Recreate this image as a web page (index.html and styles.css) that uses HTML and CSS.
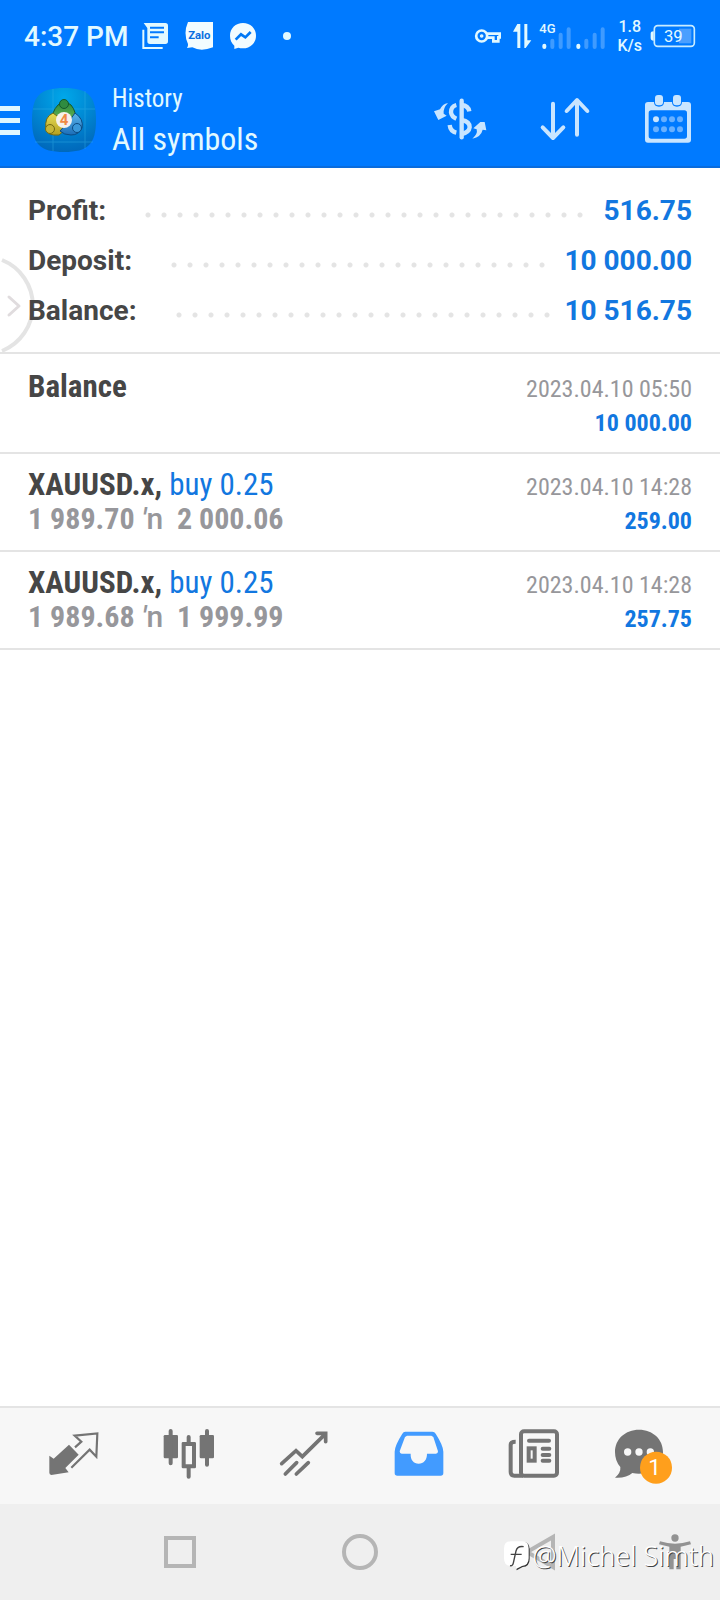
FILE: index.html
```html
<!DOCTYPE html>
<html lang="en">
<head>
<meta charset="utf-8">
<meta name="viewport" content="width=device-width, initial-scale=1">
<title>History</title>
<link rel="stylesheet" href="styles.css">
</head>
<body>
<div class="screen">
  <header class="top">
    <div class="status">
      <div class="status-left">
        <span class="clock">4:37 PM</span>
        <svg width="26" height="26" viewBox="426 69 78 78"><path fill="#e2f9ff" fill-rule="evenodd" d="M431 69H496q8 0 8 8V124q0 8-8 8H450q-8 0-8-8V84zM450 80h42v6h-42zM450 94h42v6h-42zM450 109h26v6h-26z"/><path d="M430 89V144H488" fill="none" stroke="#e2f9ff" stroke-width="6"/></svg>
        <svg width="28" height="28" viewBox="558 66 84 84"><path fill="#f2fcff" d="M567 66H642V142Q606 156 580 142L564 144Q568 139 567 132Q552 100 567 66z"/><text x="601" y="117" text-anchor="middle" font-size="34" font-weight="700" fill="#0b6fe0">Zalo</text></svg>
        <svg width="26" height="26" viewBox="690 69 78 78"><path fill="#f2fcff" d="M729 69C751 69 768 85 768 107S751 145 729 145q-8 0-14-2l-12 4v-10C695 130 690 119 690 107C690 85 707 69 729 69z"/><path d="M707 119L723 103L736 112L752 96" fill="none" stroke="#0078f5" stroke-width="8"/></svg>
        <span class="dot"></span>
      </div>
      <div class="status-right">
        <svg width="26" height="16" viewBox="345 85 78 48"><g fill="none" stroke="#e2f9ff"><circle cx="365" cy="109" r="16.5" stroke-width="8"/><circle cx="365" cy="109" r="3" stroke-width="5"/><path d="M381 102H419V113H415V125H400V114H381" stroke-width="8"/></g></svg>
        <svg width="18" height="24" viewBox="461 74 54 72"><path fill="#e2f9ff" d="M474 74h9v72h-9V97h-13zM495 74h9v49h12l-17 23h-4z"/></svg>
        <svg class="signal" width="66" height="30" viewBox="538 60 198 90"><text x="539" y="95" font-size="39" font-weight="500" fill="#e2f9ff">4G</text><g stroke-linecap="round" stroke-width="12"><path d="M554 134v4M656 134v4" stroke="#e2f9ff"/><path d="M578 119v19M603 101v37M627 85v53M680 119v19M705 101v37M729 85v53" stroke="#3f9bff"/></g></svg>
        <span class="speed">1.8<br>K/s</span>
        <svg class="battery" width="45" height="22" viewBox="870 75 135 66"><rect x="883" y="77" width="120" height="62" rx="10" fill="none" stroke="#c9ecff" stroke-width="5"/><path d="M881 94q-9 0-9 7v13q0 8 9 8z" fill="#e2f9ff"/><rect x="957" y="86" width="37" height="44" fill="#4a9fff"/><text x="940" y="126" text-anchor="middle" font-size="50" fill="#e2f9ff">39</text></svg>
      </div>
    </div>
    <div class="appbar">
      <button class="icon-btn burger" aria-label="Menu"><svg width="20" height="30" viewBox="0 0 20 30"><path d="M0 2.5H20M0 14.5H20M0 26.5H20" stroke="#dff6ff" stroke-width="5"/></svg></button>
      <svg class="logo" width="64" height="64" viewBox="0 0 64 64">
        <defs>
          <radialGradient id="tile" cx=".5" cy=".15" r=".9"><stop offset="0" stop-color="#00a8ea"/><stop offset=".55" stop-color="#0083d0"/><stop offset="1" stop-color="#0065b8"/></radialGradient>
          <linearGradient id="gr" x2="0" y2="1"><stop stop-color="#2b8a3a"/><stop offset="1" stop-color="#6cb85a"/></linearGradient>
          <linearGradient id="ye" x2="0" y2="1"><stop stop-color="#e6dd58"/><stop offset="1" stop-color="#b5a020"/></linearGradient>
          <linearGradient id="bl" x2="0" y2="1"><stop stop-color="#5cb6ec"/><stop offset="1" stop-color="#1b6db8"/></linearGradient>
        </defs>
        <path d="M32 0C56 0 64 8 64 32S56 64 32 64S0 56 0 32S8 0 32 0z" fill="url(#tile)"/>
        <path d="M21 1V63M53 3V61M1 21H63M3 54H61" stroke="#38b5e8" stroke-width="1" opacity=".4"/>
        <path d="M21 34Q19 24 26 17Q32 11 39 17Q45 24 43 34z" fill="url(#gr)" stroke="#14592d"/>
        <path d="M21 25Q12 29 14 41Q15 48 27 47L33 42L29 31z" fill="url(#ye)" stroke="#726913"/>
        <path d="M43 25Q52 31 50 40Q47 47 39 47Q32 47 28 43L38 32z" fill="url(#bl)" stroke="#0c4b83"/>
        <circle cx="32" cy="16" r="4.5" fill="#2f8b40" stroke="#14592d"/><circle cx="18" cy="41" r="4.5" fill="#c6b639" stroke="#726913"/><circle cx="45" cy="40" r="4.5" fill="#3a98da" stroke="#0c4b83"/>
        <circle cx="32" cy="32" r="8" fill="#f5f1ed"/><text x="32" y="37" text-anchor="middle" font-size="15" font-weight="700" fill="#ef8a45">4</text>
      </svg>
      <div class="titles"><span class="subtitle">History</span><h1 class="title">All symbols</h1></div>
      <div class="actions">
        <button class="icon-btn" aria-label="Symbol"><svg width="54" height="42" viewBox="219 294 162 126"><g fill="none" stroke="#c9e5ff" stroke-width="13"><path d="M305 302V412" stroke-linecap="round"/><path d="M289 315Q273 319 273 337Q275 350 289 356M305 315Q325 317 328 334M305 360Q329 364 329 382Q327 398 305 402M269 375Q271 394 289 398"/></g><path fill="#c9e5ff" d="M264 309Q247 312 240 328L222 334L235 360L260 347L251 341Q249 324 264 309zM337 416Q354 402 350 388L340 385L361 366H374L379 391L368 389Q363 411 337 416z"/></svg></button>
        <button class="icon-btn" aria-label="Sort"><svg width="50" height="44" viewBox="540 292 150 132"><path d="M576 312V412M545 383L576 415L607 383M648 405V304M617 334L648 301L679 334" fill="none" stroke="#c9e5ff" stroke-width="12" stroke-linecap="round" stroke-linejoin="round"/></svg></button>
        <button class="icon-btn" aria-label="Calendar"><svg width="46" height="48" viewBox="855 284 138 144"><path fill="#c9e5ff" fill-rule="evenodd" d="M864 305H882Q882 319 897 319T912 305H936Q936 319 951 319T966 305H984q9 0 9 9V418q0 9-9 9H864q-9 0-9-9V314q0-9 9-9zM874 330q-8 0-8 8v69q0 8 8 8H973q8 0 8-8V338q0-8-8-8z"/><rect x="885" y="284" width="24" height="31" rx="9" fill="#c9e5ff"/><rect x="939" y="284" width="24" height="31" rx="9" fill="#c9e5ff"/><circle cx="888" cy="357" r="9" fill="#c9e5ff"/><g fill="#68b0ff"><circle cx="912" cy="357" r="9"/><circle cx="936" cy="357" r="9"/><circle cx="960" cy="357" r="9"/><circle cx="888" cy="387" r="9"/><circle cx="912" cy="387" r="9"/><circle cx="936" cy="387" r="9"/><circle cx="960" cy="387" r="9"/></g></svg></button>
      </div>
    </div>
  </header>

  <main class="content">
    <dl class="summary">
      <div class="sum-row"><dt>Profit:</dt><dd>516.75</dd></div>
      <div class="sum-row"><dt>Deposit:</dt><dd>10 000.00</dd></div>
      <div class="sum-row"><dt>Balance:</dt><dd>10 516.75</dd></div>
    </dl>
    <button class="handle" aria-label="Open panel"><svg width="34" height="96" viewBox="0 0 34 96"><path d="M2 3A49 49 0 0 1 2 94" fill="none" stroke="#e4e4e4" stroke-width="4"/><path d="M9 40L19 49L9 58" fill="none" stroke="#e0dcde" stroke-width="3" stroke-linecap="round" stroke-linejoin="round"/></svg></button>
    <ul class="deals">
      <li class="deal deal-balance"><div><p class="name"><b>Balance</b></p></div><div class="side"><time>2023.04.10 05:50</time><b class="amount">10 000.00</b></div></li>
      <li class="deal"><div><p class="name"><b>XAUUSD.x,</b> <span class="buy">buy 0.25</span></p><p class="prices">1 989.70 <span class="mark"><i>′</i>n</span> &nbsp;2 000.06</p></div><div class="side"><time>2023.04.10 14:28</time><b class="amount">259.00</b></div></li>
      <li class="deal"><div><p class="name"><b>XAUUSD.x,</b> <span class="buy">buy 0.25</span></p><p class="prices">1 989.68 <span class="mark"><i>′</i>n</span> &nbsp;1 999.99</p></div><div class="side"><time>2023.04.10 14:28</time><b class="amount">257.75</b></div></li>
    </ul>
  </main>

  <nav class="tabs" aria-label="Sections">
    <button class="tab" aria-label="Quotes"><svg width="50" height="44" viewBox="146 100 150 132"><path fill="#747474" d="M206 138L235 168L195 208L205 221L153 229Q147 228 147 222V171L160 180z"/><path d="M224 146L243 129L223 111L291 104L288 174L268 153L213 207" fill="none" stroke="#747474" stroke-width="6.5"/></svg></button>
    <button class="tab" aria-label="Charts"><svg width="52" height="50" viewBox="488 89 156 150"><g fill="#747474"><rect x="490" y="107" width="43" height="70" rx="4"/><rect x="598" y="107" width="43" height="70" rx="4"/><path fill-rule="evenodd" d="M548 128h35q4 0 4 4v71q0 4-4 4h-35q-4 0-4-4v-71q0-4 4-4zM556 140v55h19v-55z"/></g><path d="M511 95V192M620 95V196M565 113V130M565 205V232" stroke="#747474" stroke-width="12" stroke-linecap="round"/></svg></button>
    <button class="tab" aria-label="Trade"><svg width="50" height="46" viewBox="835 94 150 138"><path d="M843 192L886 153L905 171L972 105M949 101H975V126M854 223L888 189M887 223L923 189" fill="none" stroke="#747474" stroke-width="11" stroke-linecap="round"/></svg></button>
    <button class="tab" aria-label="History" aria-current="page"><svg width="50" height="46" viewBox="101 94 150 138"><path fill="#429bff" fill-rule="evenodd" d="M135 96H216Q223 96 226 102Q249 138 249 156V220q0 8-8 8H111q-8 0-8-8V156Q103 138 126 102Q129 96 135 96zM140 108L134 112L118 155Q118 162 124 162H151C150 181 160 192 175 192S200 181 200 162H227Q233 162 233 155L219 112L213 108z"/></svg></button>
    <button class="tab" aria-label="News"><svg width="52" height="50" viewBox="443 88 156 150"><g fill="none" stroke="#747474" stroke-width="12"><rect x="482" y="95" width="108" height="133" rx="9"/><path d="M466 126Q451 126 451 135V217Q451 228 462 228H488"/><rect x="505" y="146" width="18" height="37"/><path d="M506 123H566M547 147H567M547 166H567M547 183H567" stroke-linecap="round"/></g></svg></button>
    <button class="tab" aria-label="Messages"><svg width="72" height="54" viewBox="759 82 216 162"><path fill="#747474" d="M837 90C878 90 909 118 909 157S878 222 837 222Q827 222 817 220Q799 236 765 234Q783 219 781 202Q765 184 765 157C765 118 796 90 837 90z"/><circle cx="803" cy="157" r="11" fill="#f7f7f7"/><circle cx="837" cy="157" r="11" fill="#f7f7f7"/><circle cx="871" cy="157" r="11" fill="#f7f7f7"/><circle cx="888" cy="204" r="48" fill="#ff9f1c"/><text x="884" y="227" text-anchor="middle" font-size="68" fill="#fff">1</text></svg></button>
  </nav>
  <div class="sysnav">
    <button class="sys recent" aria-label="Recent apps"><svg width="32" height="32"><rect x="2" y="2" width="28" height="28" fill="none" stroke="#b5b5b5" stroke-width="4"/></svg></button>
    <button class="sys" aria-label="Home"><svg width="36" height="36"><circle cx="18" cy="18" r="16" fill="none" stroke="#b5b5b5" stroke-width="4"/></svg></button>
    <button class="sys" aria-label="Back"><svg width="36" height="36" viewBox="0 0 36 36"><path d="M31 3V33L5 18z" fill="none" stroke="#b5b5b5" stroke-width="4"/></svg></button>
    <button class="sys" aria-label="Accessibility"><svg width="32" height="36" viewBox="897 402 96 108"><path fill="#929292" d="M900 424Q945 438 990 424L993 433L962 440V508H949V477H941V508H928V440L897 433z"/><circle cx="945" cy="414" r="11" fill="#929292"/></svg></button>
    <div class="watermark"><svg width="26" height="30" viewBox="434 430 78 90"><path d="M480 433H492Q511 434 511 455V484Q511 507 490 508L472 518L470 506z" fill="#333"/><path d="M455 431H488Q508 431 508 452V482Q508 503 488 505L470 514V505H455Q434 505 434 482V452Q434 431 455 431z" fill="#fff"/><path d="M493 447Q474 444 470 460L462 496Q460 506 452 504M454 470H487" fill="none" stroke="#444" stroke-width="4"/></svg><span>@Michel Simth</span></div>
  </div>
</div>
</body>
</html>
```
FILE: styles.css
```css
* { box-sizing: border-box; }
body { margin: 0; background: #fff; color: #464646; font-family: Roboto, "Liberation Sans", sans-serif; }
svg { display: block; flex: none; overflow: visible; }
button { display: flex; align-items: center; justify-content: center; padding: 0; border: 0; background: none; font: inherit; color: inherit; }
p, h1, dl, dd, ul { margin: 0; padding: 0; }
.screen { min-height: 100vh; display: flex; flex-direction: column; }

.top { background: #007aff; color: #e2f9ff; border-bottom: 2px solid #0a6cdc; }
.status { height: 72px; padding: 0 25px 0 24px; display: flex; align-items: center; justify-content: space-between; }
.status-left { display: flex; align-items: center; gap: 17px; }
.clock { margin-right: -3px; padding-top: 2px; font-size: 28px; font-weight: 500; line-height: 36px; }
.dot { width: 8px; height: 8px; margin-left: 10px; border-radius: 50%; background: #e2f9ff; }
.status-right { display: flex; align-items: center; gap: 12px; }
.signal { margin-left: -4px; }
.speed { font-size: 16px; font-weight: 500; line-height: 19px; text-align: center; }
.battery { margin-left: -4px; }

.appbar { height: 94px; padding-right: 29px; display: flex; align-items: center; }
.burger { margin: 4px 12px 0 0; }
.logo { margin-top: 2px; }
.titles { margin-left: 16px; padding-top: 4px; display: flex; flex-direction: column; font-family: "Roboto Condensed", Roboto, sans-serif; }
.subtitle { font-size: 25px; line-height: 36px; }
.title { font-size: 32px; font-weight: 400; line-height: 44px; }
.actions { margin-left: auto; display: flex; align-items: center; gap: 54px; }

.content { flex: 1; position: relative; }
.summary { padding: 18px 28px 16px; border-bottom: 2px solid #e4e4e4; }
.sum-row { position: relative; z-index: 1; display: flex; align-items: stretch; height: 50px; font-size: 28px; line-height: 50px; }
.sum-row::before { content: ""; order: 1; flex: 1; margin: 0 14px 0 34px; background: radial-gradient(circle at 8px 29px, #e4e4e4 2px, transparent 3px) 0 0 / 16px 50px repeat-x; }
.sum-row dt { font-weight: 700; }
.sum-row dd { order: 2; font-weight: 700; color: #1277e0; }
.handle { position: absolute; left: 0; top: 89px; }

.deals { list-style: none; font-family: "Roboto Condensed", Roboto, sans-serif; }
.deal { display: flex; justify-content: space-between; min-height: 98px; padding: 14px 28px 11px; border-bottom: 2px solid #e4e4e4; }
.deal-balance { padding-top: 16px; min-height: 100px; }
.name { font-size: 31px; line-height: 34px; }
.buy { color: #1277e0; }
.prices { font-size: 30px; line-height: 34px; font-weight: 700; color: #97979b; }
.mark { font-family: Roboto, sans-serif; font-weight: 500; }
.side { display: flex; flex-direction: column; align-items: flex-end; font-size: 24px; line-height: 34px; padding-top: 2px; }
.side time { color: #97979b; }
.amount { color: #1277e0; }

.tabs { display: flex; height: 98px; padding: 0 14px 4px 16px; background: #f7f7f7; border-top: 2px solid #e4e4e4; }
.tab { flex: 1; }
.sysnav { position: relative; display: grid; grid-template-columns: 1fr 2fr 2fr 2fr 1fr; height: 96px; background: #efefef; }
.recent { grid-column: 2; }
.watermark { position: absolute; right: 6px; bottom: 26px; display: flex; align-items: center; gap: 3px; color: #fff; font-family: "Noto Sans", sans-serif; font-size: 27px; font-weight: 300; line-height: 36px; text-shadow: 1px 1px 0 #444; }
```
